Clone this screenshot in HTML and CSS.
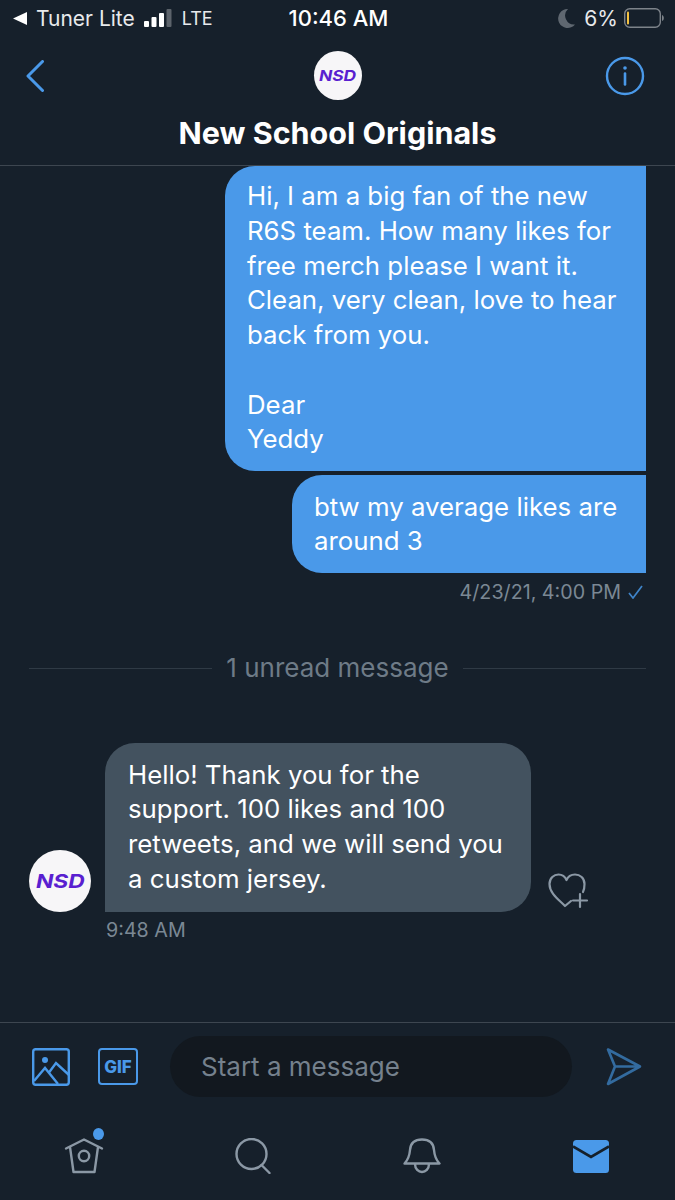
FILE: index.html
```html
<!DOCTYPE html>
<html>
<head>
    <title>New School Originals</title>
    <link rel="stylesheet" href="styles.css">
</head>
<body>
    <div class="phone">
        <div class="status">
            <div class="status-left">
                <svg class="back-app" width="14" height="13" viewBox="0 0 14 13"><path d="M14 0v13L0 6.500z" fill="#fff"/></svg>
                <span class="carrier">Tuner Lite</span>
                <svg class="signal" width="28" height="19" viewBox="0 0 28 19">
                    <rect x="0" y="12" width="5" height="6" rx="1" fill="#fff"/>
                    <rect x="7.500" y="8" width="5" height="10" rx="1" fill="#fff"/>
                    <rect x="15" y="4" width="5" height="14" rx="1" fill="#fff"/>
                    <rect x="22.500" y="0" width="5" height="18" rx="1" fill="#5c636b"/>
                </svg>
                <span class="network">LTE</span>
            </div>
            <div class="status-time">10:46 AM</div>
            <div class="status-right">
                <svg width="17" height="19" viewBox="0 0 17 19"><path d="M10 0a9.500 9.500 0 1 0 7 15.500A9 9 0 0 1 10 0z" fill="#5f6770"/></svg>
                <span class="pct">6%</span>
                <svg width="40" height="20" viewBox="0 0 40 20">
                    <rect x="0.700" y="0.700" width="35.600" height="18.600" rx="5" fill="none" stroke="#7d838a" stroke-width="1.400"/>
                    <rect x="3" y="3.500" width="2" height="13" rx="1" fill="#f5c242"/>
                    <path d="M38 7c1.300.5 1.800 1.500 1.800 3s-.5 2.500-1.800 3z" fill="#7d838a"/>
                </svg>
            </div>
        </div>

        <div class="nav">
            <div class="nav-top">
                <svg class="nav-back" width="18" height="32" viewBox="0 0 18 32"><path d="M16.500 1.500 2 16l14.500 14.500" fill="none" stroke="#4a99e9" stroke-width="3" stroke-linecap="round" stroke-linejoin="round"/></svg>
                <div class="logo logo-nav"><span>NSD</span></div>
                <svg class="nav-info" width="40" height="40" viewBox="0 0 40 40">
                    <circle cx="20" cy="20" r="18" fill="none" stroke="#4a99e9" stroke-width="2.400"/>
                    <circle cx="20" cy="12" r="1.800" fill="#4a99e9"/>
                    <path d="M20 17.500v11" stroke="#4a99e9" stroke-width="2.600" stroke-linecap="round"/>
                </svg>
            </div>
            <h1>New School Originals</h1>
        </div>

        <div class="messages">
            <div class="bubble bubble-out bubble-first">Hi, I am a big fan of the new R6S team. How many likes for free merch please I want it. Clean, very clean, love to hear back from you.<br><br>Dear<br>Yeddy</div>
            <div class="bubble bubble-out bubble-second">btw my average likes are around 3</div>
            <div class="meta meta-out">
                <span>4/23/21, 4:00 PM</span>
                <svg width="15" height="14" viewBox="0 0 15 14"><path d="M1 8l4 5L14 1" fill="none" stroke="#3f84c9" stroke-width="1.700"/></svg>
            </div>

            <div class="unread"><span>1 unread message</span></div>

            <div class="incoming">
                <div class="logo logo-msg"><span>NSD</span></div>
                <div class="bubble bubble-in">Hello! Thank you for the support. 100 likes and 100 retweets, and we will send you a custom jersey.</div>
                <svg class="heart" width="42" height="36" viewBox="0 0 42 36">
                    <path d="M23 28l-6 5C10 26 1.500 20 1.500 11 1.500 5 6 1.500 10.500 1.500c3.500 0 6.500 2 8 5.500 1.500-3.500 4.500-5.500 8.500-5.500 5 0 9.500 3.500 9.500 9.500 0 3-.5 6-1.500 8" fill="none" stroke="#8b98a5" stroke-width="2.200" stroke-linecap="round" stroke-linejoin="round"/>
                    <path d="M32 21v13M25 27.500h14" stroke="#8b98a5" stroke-width="2.200" stroke-linecap="round"/>
                </svg>
            </div>
            <div class="meta meta-in">9:48 AM</div>
        </div>

        <div class="composer">
            <svg class="composer-icon" width="38" height="38" viewBox="0 0 38 38">
                <rect x="1.200" y="1.200" width="35.600" height="35.600" rx="2.500" fill="none" stroke="#4a99e9" stroke-width="2.400"/>
                <circle cx="13" cy="12" r="3" fill="#4a99e9"/>
                <path d="M2 33 13 20l13 16M17 24.500 24 15l13 12" fill="none" stroke="#4a99e9" stroke-width="2.400"/>
            </svg>
            <div class="gif"><span>GIF</span></div>
            <div class="input">Start a message</div>
            <svg class="composer-icon" width="36" height="38" viewBox="0 0 36 38">
                <path d="M2 1.500 34 18.500 2 36l7-17.500zM9 18.500h25" fill="none" stroke="#336b9f" stroke-width="2.600" stroke-linejoin="round"/>
            </svg>
        </div>

        <div class="tabs">
            <div class="tab">
                <svg width="40" height="38" viewBox="0 0 40 38">
                    <path d="M2 10.500 20 1.500l18 9M6 9l3.500 25h21L34 9" fill="none" stroke="#8b98a5" stroke-width="2.400" stroke-linejoin="round" stroke-linecap="round"/>
                    <circle cx="20" cy="18" r="5.200" fill="none" stroke="#8b98a5" stroke-width="2.400"/>
                </svg>
                <span class="dot"></span>
            </div>
            <div class="tab">
                <svg width="36" height="36" viewBox="0 0 36 36">
                    <circle cx="16.500" cy="16" r="15" fill="none" stroke="#8b98a5" stroke-width="2.400"/>
                    <path d="M26.500 27l8 8" stroke="#8b98a5" stroke-width="2.400" stroke-linecap="round"/>
                </svg>
            </div>
            <div class="tab">
                <svg width="38" height="36" viewBox="0 0 38 36">
                    <path d="M1.500 25.500C5 22 6.500 18 7 12 7.500 5 12 1.500 19 1.500S30.500 5 31 12c.5 6 2 10 5.500 13.500zM12 26c0 5 3.500 8 7 8s7-3 7-8" fill="none" stroke="#8b98a5" stroke-width="2.400" stroke-linejoin="round"/>
                </svg>
            </div>
            <div class="tab tab-mail">
                <svg width="36" height="33" viewBox="0 0 36 33">
                    <rect x="0" y="0" width="36" height="33" rx="3.500" fill="#4a99e9"/>
                    <path d="M0 6.500 18 17 36 6.500" fill="none" stroke="#15202b" stroke-width="2.800"/>
                </svg>
            </div>
        </div>
    </div>
</body>
</html>
```

FILE: styles.css
```css
body {
    margin: 0;
    background: #16202b;
    font-family: Inter, "Liberation Sans", sans-serif;
    color: #fff;
}
.phone {
    width: 675px;
    height: 1200px;
    display: flex;
    flex-direction: column;
    overflow: hidden;
}

/* status bar */
.status {
    height: 36px;
    flex-shrink: 0;
    display: grid;
    grid-template-columns: 1fr auto 1fr;
    align-items: center;
    padding: 0 11px 0 13px;
}
.status-left, .status-right {
    display: flex;
    align-items: center;
}
.status-right {
    justify-content: flex-end;
}
.back-app {
    margin-right: 9px;
}
.signal {
    margin: 0 10px 0 9px;
}
.carrier {
    font-size: 21px;
    color: #e8eaec;
}
.network {
    font-size: 18px;
    color: #e8eaec;
}
.status-time {
    font-size: 22px;
    font-weight: 500;
}
.pct {
    margin: 0 6px 0 9px;
    font-size: 21px;
    color: #e8eaec;
}

/* header */
.nav {
    height: 130px;
    box-sizing: border-box;
    border-bottom: 1px solid #3d4650;
    flex-shrink: 0;
}
.nav-top {
    display: grid;
    grid-template-columns: 1fr auto 1fr;
    align-items: center;
    padding: 15px 30px 0;
}
.nav-back {
    margin-left: -4px;
}
.nav-info {
    justify-self: end;
}
h1 {
    margin: 16px 0 0;
    font-size: 30.500px;
    line-height: 34px;
    font-weight: 700;
    text-align: center;
}
.logo {
    background: #f7f6f8;
    border-radius: 50%;
    display: flex;
    align-items: center;
    justify-content: center;
    color: #5a1fd0;
    font-weight: 700;
    font-style: italic;
}
.logo span {
    transform: scaleX(1.2);
}
.logo-nav {
    width: 48px;
    height: 49px;
    font-size: 14.500px;
}
.logo-msg {
    width: 62px;
    height: 62px;
    font-size: 19px;
    flex-shrink: 0;
}

/* messages */
.messages {
    flex: 1;
    padding: 0 29px;
    display: flex;
    flex-direction: column;
}
.bubble {
    box-sizing: border-box;
    font-size: 25.800px;
    line-height: 34.750px;
    border-radius: 30px;
}
.bubble-out {
    background: #4a99e9;
    align-self: flex-end;
}
.bubble-first {
    width: 421px;
    padding: 13px 22px 14px;
    border-top-right-radius: 0;
    border-bottom-right-radius: 0;
}
.bubble-second {
    width: 354px;
    margin-top: 4px;
    padding: 14.500px 22px 14px;
    border-top-right-radius: 0;
    border-bottom-right-radius: 0;
}
.bubble-in {
    width: 426px;
    margin-left: 14px;
    padding: 14.500px 22px 15.500px 23px;
    background: #43525f;
    border-bottom-left-radius: 0;
}
.meta {
    font-size: 19.700px;
    line-height: 24px;
    color: #7b8894;
}
.meta-out {
    margin-top: 7px;
    display: flex;
    justify-content: flex-end;
    align-items: center;
    gap: 7px;
    padding-right: 3px;
}
.meta-in {
    margin: 6px 0 0 77px;
}
.unread {
    margin-top: 49px;
    display: flex;
    align-items: center;
    gap: 14px;
    font-size: 26px;
    line-height: 30px;
    color: #6e7b87;
}
.unread::before, .unread::after {
    content: "";
    flex: 1;
    height: 1px;
    background: #2f3a45;
}
.incoming {
    margin-top: 60px;
    display: flex;
    align-items: flex-end;
}
.heart {
    margin: 0 0 3px 17px;
}

/* bottom bars */
.composer {
    height: 76px;
    box-sizing: border-box;
    flex-shrink: 0;
    border-top: 1px solid #3d4650;
    display: flex;
    align-items: center;
    padding: 13px 33px 1px 32px;
}
.composer-icon {
    flex-shrink: 0;
}
.gif {
    width: 40px;
    height: 37px;
    flex-shrink: 0;
    box-sizing: border-box;
    margin-left: 28px;
    border: 2.500px solid #4a99e9;
    border-radius: 4px;
    display: flex;
    align-items: center;
    justify-content: center;
    color: #4a99e9;
    font-size: 17px;
    font-weight: 800;
}
.input {
    width: 402px;
    height: 61px;
    flex-shrink: 0;
    box-sizing: border-box;
    margin: 0 34px 0 32px;
    padding-left: 31px;
    border-radius: 31px;
    background: #12181f;
    color: #75818d;
    font-size: 26px;
    line-height: 61px;
}
.tabs {
    height: 102px;
    flex-shrink: 0;
    box-sizing: border-box;
    display: grid;
    grid-template-columns: repeat(4, 1fr);
    justify-items: center;
    padding-top: 40px;
}
.tab {
    position: relative;
    height: 38px;
}
.tab-mail {
    padding-top: 2px;
}
.dot {
    position: absolute;
    top: -10px;
    right: 0;
    width: 11px;
    height: 12px;
    border-radius: 50%;
    background: #4a99e9;
}
```
